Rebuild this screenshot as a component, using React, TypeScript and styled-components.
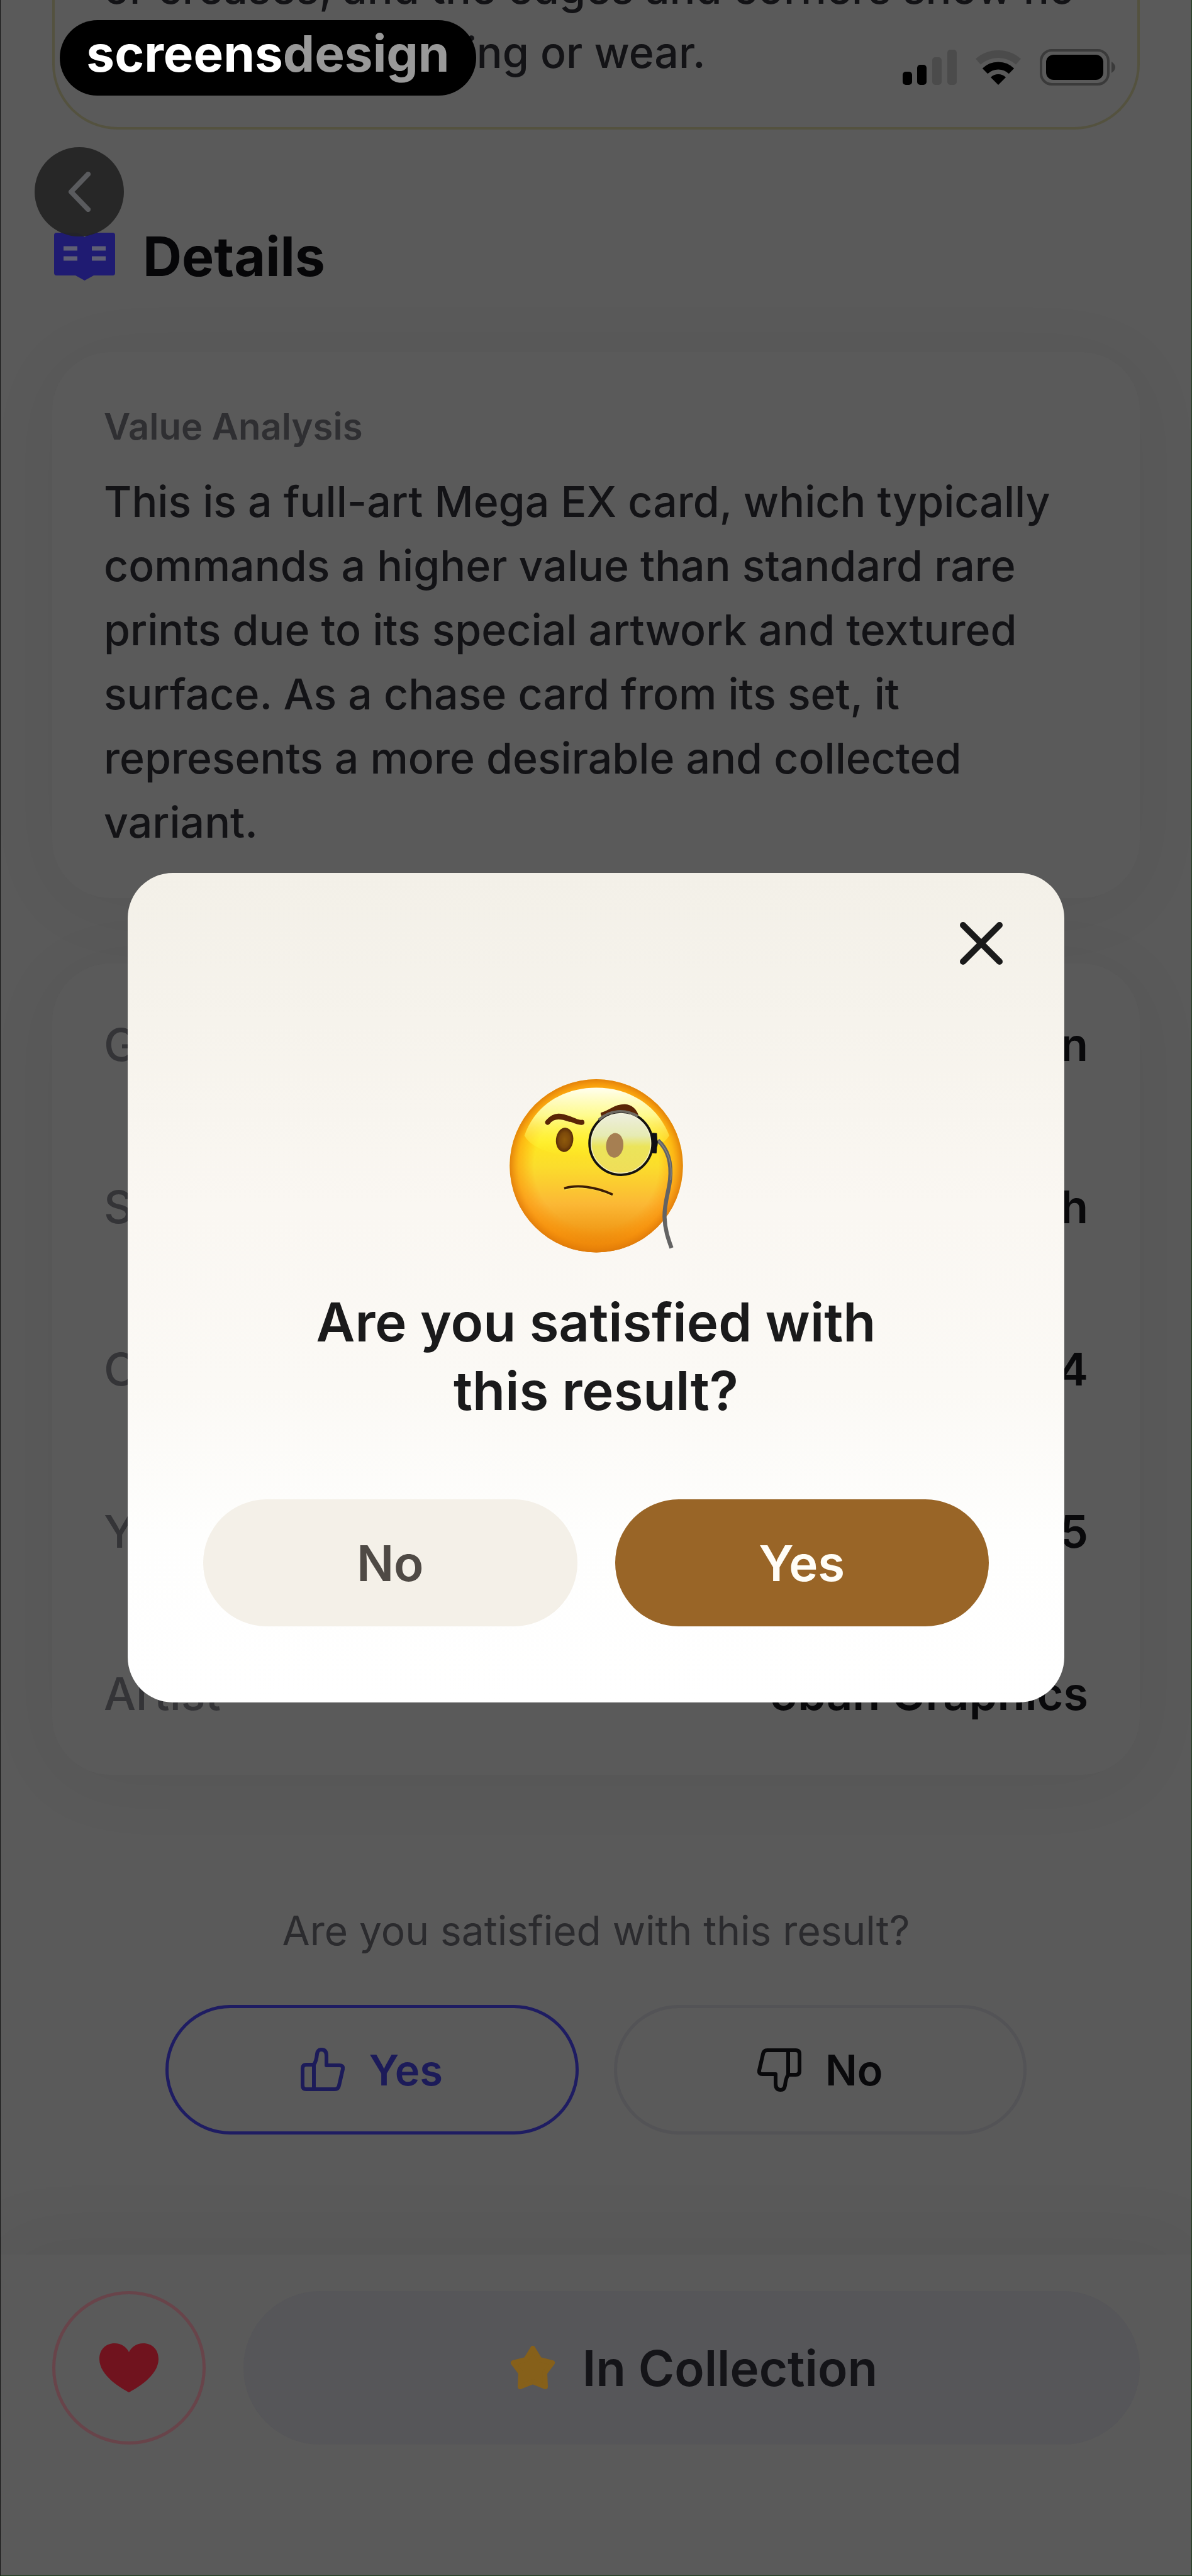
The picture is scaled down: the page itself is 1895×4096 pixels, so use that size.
import React from "react";
import styled, { createGlobalStyle, css } from "styled-components";

const GlobalStyle = createGlobalStyle`
  *, *::before, *::after { box-sizing: border-box; }
  body {
    margin: 0;
    background: #5a5a5a;
    font-family: Inter, "Liberation Sans", sans-serif;
  }
  h1, h2, h3, p, dl, dt, dd { margin: 0; }
  button { font: inherit; cursor: pointer; }
`;

const Page = styled.div`
  position: relative;
  display: flex;
  flex-direction: column;
  min-height: 100vh;
  overflow: hidden;
  background: #5a5a5a;
  border: 1px solid #1d3d1b;
  border-top: 0;
  border-left-color: #161616;
`;

const Content = styled.main`
  display: flex;
  flex-direction: column;
  flex: 1;
  padding: 0 82px;
`;

const bodyText = css`
  font-size: 68px;
  line-height: 102px;
  font-weight: 500;
  color: #131316;
`;

const ConditionCard = styled.section`
  margin-top: -70px;
  padding: 0 78px 68px;
  border: 4px solid #54523f;
  border-top: 0;
  border-radius: 0 0 104px 104px;
`;

const Paragraph = styled.p`
  ${bodyText}
`;

const SectionHeader = styled.header`
  display: flex;
  align-items: center;
  gap: 44px;
  height: 100px;
  margin-top: 152px;
  padding-left: 3px;
`;

const SectionTitle = styled.h1`
  font-size: 86px;
  line-height: 100px;
  font-weight: 700;
  color: #060608;
`;

const Card = styled.section`
  border-radius: 92px;
  padding: 0 82px;
  background: #5a5a5a;
  box-shadow: 0 12px 120px rgba(0, 0, 0, 0.05);
`;

const AnalysisCard = styled(Card)`
  margin-top: 102px;
  padding-top: 82px;
  padding-bottom: 70px;
`;

const CardLabel = styled.h2`
  margin-bottom: 32px;
  font-size: 58px;
  line-height: 72px;
  font-weight: 600;
  color: #2f2f32;
`;

const FactsCard = styled(Card)`
  margin-top: 104px;
`;

const FactList = styled.dl`
  padding: 0;
`;

const Fact = styled.div`
  display: flex;
  justify-content: space-between;
  align-items: center;
  height: 258px;
  font-size: 72px;
  line-height: 102px;
`;

const FactName = styled.dt`
  font-weight: 500;
  color: #343437;
`;

const FactValue = styled.dd`
  font-weight: 600;
  color: #09090b;
`;

const Feedback = styled.section`
  display: flex;
  flex-direction: column;
  gap: 70px;
  margin-top: 200px;
  padding: 0 180px;
`;

const FeedbackQuestion = styled.p`
  text-align: center;
  font-size: 64px;
  line-height: 96px;
  font-weight: 400;
  color: #2b2b2e;
`;

const ButtonRow = styled.div`
  display: flex;
  gap: 56px;
`;

const FeedbackButton = styled.button<{ $tone: "accent" | "plain" }>`
  flex: 1;
  display: flex;
  align-items: center;
  justify-content: center;
  gap: 38px;
  height: 206px;
  padding: 0;
  border: 5px solid ${(p) => (p.$tone === "accent" ? "#1e1c62" : "#535356")};
  border-radius: 103px;
  background: transparent;
  color: ${(p) => (p.$tone === "accent" ? "#1c1b59" : "#09090b")};
  font-size: 67px;
  font-weight: 600;
`;

const BottomBar = styled.footer`
  display: flex;
  gap: 60px;
  margin-top: 190px;
  padding: 58px 82px 208px;
  background: #5a5a5a;
  box-shadow: 0 -20px 120px rgba(0, 0, 0, 0.05);
`;

const FavouriteButton = styled.button`
  display: flex;
  align-items: center;
  justify-content: center;
  width: 244px;
  height: 244px;
  padding: 0;
  border: 5px solid #68444a;
  border-radius: 50%;
  background: transparent;
`;

const CollectionButton = styled.button`
  flex: 1;
  display: flex;
  align-items: center;
  justify-content: center;
  gap: 44px;
  height: 244px;
  padding: 0 0 0 8px;
  border: 0;
  border-radius: 122px;
  background: #565659;
  color: #141418;
  font-size: 78px;
  font-weight: 600;
`;

const StatusBar = styled.div`
  position: absolute;
  top: 78px;
  right: 120px;
  display: flex;
  align-items: center;
  gap: 29px;
`;

const BackButton = styled.button`
  position: absolute;
  top: 234px;
  left: 54px;
  display: flex;
  align-items: center;
  justify-content: center;
  width: 142px;
  height: 142px;
  padding: 0;
  border: 0;
  border-radius: 50%;
  background: rgba(36, 36, 36, 0.94);
`;

const Badge = styled.a`
  position: absolute;
  top: 32px;
  left: 94px;
  display: flex;
  align-items: center;
  justify-content: center;
  width: 662px;
  height: 120px;
  padding-bottom: 14px;
  border-radius: 60px;
  background: #000;
  color: #fff;
  font-size: 80px;
  line-height: 96px;
  font-weight: 700;
  text-decoration: none;
`;

const BadgeMuted = styled.span`
  color: #999;
`;

const Overlay = styled.div`
  position: absolute;
  inset: 0;
  display: flex;
  align-items: center;
  justify-content: center;
  padding: 0 202px;
`;

const Dialog = styled.div`
  flex: 1;
  display: flex;
  flex-direction: column;
  padding: 58px 120px 121px;
  border-radius: 72px;
  background: linear-gradient(#f3f0e8 0%, #f6f3ec 18%, #faf7f2 40%, #fbf9f5 62%, #fefefd 80%, #fff 100%);
`;

const CloseButton = styled.button`
  align-self: flex-end;
  display: flex;
  align-items: center;
  justify-content: center;
  width: 108px;
  height: 108px;
  margin-right: -42px;
  padding: 0;
  border: 0;
  background: transparent;
`;

const DialogBody = styled.div`
  display: flex;
  flex-direction: column;
  align-items: center;
  gap: 56px;
  margin-top: 162px;
`;

const DialogTitle = styled.h2`
  text-align: center;
  font-size: 85px;
  line-height: 109px;
  font-weight: 600;
  color: #1a1a1b;
`;

const DialogActions = styled.div`
  display: flex;
  gap: 60px;
  margin-top: 118px;
`;

const DialogButton = styled.button<{ $primary?: boolean }>`
  flex: 1;
  height: 202px;
  padding: 0;
  border: 0;
  border-radius: 101px;
  background: ${(p) => (p.$primary ? "#996527" : "#f4f0e8")};
  color: ${(p) => (p.$primary ? "#fffdf6" : "#4f4a45")};
  font-size: 78px;
  font-weight: 600;
`;

const BookIcon = () => (
  <svg width="97" height="76" viewBox="0 0 97 76" aria-hidden="true">
    <path
      d="M4 0H36Q43 2 48.500 7Q54 2 61 0H93Q97 0 97 4V64Q97 68 93 68H63L48.500 76L34 68H4Q0 68 0 64V4Q0 0 4 0Z"
      fill="#1f1b72"
    />
    <path d="M15 25H37M15 41H37M60 25H82M60 41H82" stroke="#5f5f74" strokeWidth="7" />
  </svg>
);

const ThumbUp = () => (
  <svg width="70" height="70" viewBox="0 0 70 70" fill="none" stroke="currentColor" strokeWidth="6" strokeLinejoin="round" strokeLinecap="round" aria-hidden="true">
    <path d="M21 27H9Q3 27 3 33V60Q3 66 9 66H54Q60 66 61 60L67 34Q68 28 62 28H41V13Q41 3 33 3Q27 3 26 10Q25 21 21 27V66" />
  </svg>
);

const ThumbDown = () => (
  <svg width="70" height="70" viewBox="0 0 70 70" fill="none" stroke="currentColor" strokeWidth="6" strokeLinejoin="round" strokeLinecap="round" aria-hidden="true">
    <path d="M49 43H61Q67 43 67 37V10Q67 4 61 4H16Q10 4 9 10L3 36Q2 42 8 42H29V57Q29 67 37 67Q43 67 44 60Q45 49 49 43V4" />
  </svg>
);

const HeartIcon = () => (
  <svg width="94" height="78" viewBox="0 0 94 78" aria-hidden="true">
    <path d="M47 78C36 72 0 52 0 25C0 9 11 0 24 0C35 0 43 6 47 14C51 6 59 0 70 0C83 0 94 9 94 25C94 52 58 72 47 78Z" fill="#70131e" />
  </svg>
);

const StarIcon = () => (
  <svg width="70" height="70" viewBox="0 0 70 70" aria-hidden="true">
    <path
      d="M35 4L46 22L66 27L54 43L55 65L35 57L15 65L16 43L4 27L24 22Z"
      fill="#86601a"
      stroke="#86601a"
      strokeWidth="8"
      strokeLinejoin="round"
    />
  </svg>
);

const SignalIcon = () => (
  <svg width="86" height="56" viewBox="0 0 86 56" aria-hidden="true">
    <rect x="0" y="35" width="15" height="21" rx="5" fill="#000" />
    <rect x="23" y="24" width="15" height="32" rx="5" fill="#000" />
    <rect x="47" y="12" width="15" height="44" rx="5" fill="#4b4b4b" />
    <rect x="71" y="0" width="15" height="56" rx="5" fill="#4b4b4b" />
  </svg>
);

const WifiIcon = () => (
  <svg width="74" height="56" viewBox="0 0 74 56" aria-hidden="true">
    <path d="M5 19A48.500 48.500 0 0 1 69 19" fill="none" stroke="#4b4b4b" strokeWidth="12" />
    <path d="M16 34A30 30 0 0 1 58 34" fill="none" stroke="#000" strokeWidth="12" />
    <path d="M25 44A17 17 0 0 1 49 44L37 56Z" fill="#000" />
  </svg>
);

const BatteryIcon = () => (
  <svg width="121" height="58" viewBox="0 0 121 58" aria-hidden="true">
    <rect x="2" y="2" width="107" height="54" rx="17" fill="none" stroke="#3a3a3a" strokeWidth="4" />
    <rect x="10" y="9" width="91" height="40" rx="12" fill="#000" />
    <path d="M114 20Q120 24 120 29Q120 34 114 38Z" fill="#3a3a3a" />
  </svg>
);

const MonocleFace = () => (
  <svg width="276" height="276" viewBox="195 174 942 942" role="img" aria-label="Face with monocle">
    <defs>
      <linearGradient id="skin" x1="0" y1="0" x2="0" y2="1">
        <stop offset="0" stopColor="#ffc21a" />
        <stop offset="0.35" stopColor="#ffe81f" />
        <stop offset="0.5" stopColor="#fbdd2c" />
        <stop offset="0.72" stopColor="#fbb835" />
        <stop offset="0.88" stopColor="#f19a17" />
        <stop offset="1" stopColor="#d97c0c" />
      </linearGradient>
      <radialGradient id="rim" cx="0.5" cy="0.5" r="0.5">
        <stop offset="0.72" stopColor="#ff8a00" stopOpacity="0" />
        <stop offset="0.9" stopColor="#fb8c05" stopOpacity="0.5" />
        <stop offset="1" stopColor="#e07a08" stopOpacity="0.9" />
      </radialGradient>
      <linearGradient id="shine" x1="0" y1="0" x2="0" y2="1">
        <stop offset="0" stopColor="#fffff0" />
        <stop offset="0.4" stopColor="#feff9a" stopOpacity="0.9" />
        <stop offset="1" stopColor="#ffff20" stopOpacity="0" />
      </linearGradient>
      <linearGradient id="glass" x1="0" y1="0" x2="0" y2="1">
        <stop offset="0" stopColor="#eeeee2" />
        <stop offset="0.38" stopColor="#e6ebb2" />
        <stop offset="0.55" stopColor="#ebe45a" />
        <stop offset="1" stopColor="#f0dd58" />
      </linearGradient>
      <radialGradient id="eye">
        <stop offset="0" stopColor="#8f5a0c" />
        <stop offset="0.6" stopColor="#7d4a0a" />
        <stop offset="1" stopColor="#5a2d08" />
      </radialGradient>
    </defs>
    <circle cx="666" cy="644" r="470" fill="url(#skin)" />
    <circle cx="666" cy="644" r="470" fill="url(#rim)" />
    <path d="M276 480C330 320 480 220 666 220C850 220 1000 320 1062 480C1010 560 860 600 666 600C470 600 320 560 276 480Z" fill="url(#shine)" />
    <ellipse cx="494" cy="503" rx="47" ry="66" fill="url(#eye)" transform="rotate(6 494 503)" />
    <path d="M402 408C440 360 480 373 520 388C550 400 570 412 588 408" fill="none" stroke="#5a2506" strokeWidth="27" strokeLinecap="round" strokeLinejoin="round" />
    <path d="M404 405C440 371 480 380 520 394" fill="none" stroke="#5a2506" strokeWidth="22" strokeLinecap="round" />
    <path d="M690 356C735 344 765 310 820 310C862 312 885 340 895 370L800 352L700 378C692 374 688 364 690 356Z" fill="#5a2506" />
    <path d="M700 378Q790 318 893 366L870 374Q790 340 712 388Z" fill="#85664a" />
    <circle cx="800" cy="522" r="170" fill="url(#glass)" />
    <ellipse cx="766" cy="533" rx="47" ry="67" fill="#a67f52" transform="rotate(5 766 533)" />
    <circle cx="800" cy="522" r="162" fill="none" stroke="#f5f4d8" strokeWidth="6" opacity="0.8" />
    <circle cx="800" cy="522" r="171" fill="none" stroke="#15130f" strokeWidth="13" />
    <path d="M680 394A171 171 0 0 1 890 376" fill="none" stroke="#6e6a62" strokeWidth="14" />
    <path d="M498 770C560 748 660 758 750 801" fill="none" stroke="#ffe95a" strokeWidth="13" strokeLinecap="round" />
    <path d="M498 765C560 746 660 756 749 798" fill="none" stroke="#3d1c05" strokeWidth="13" strokeLinecap="square" />
    <path d="M1000 506C1050 550 1076 620 1066 720C1058 790 1036 840 1036 920C1038 990 1056 1040 1074 1090" fill="none" stroke="#636363" strokeWidth="22" />
    <path d="M1003 508C1056 562 1080 630 1070 720" fill="none" stroke="#858585" strokeWidth="5" />
    <path d="M972 468L992 470L994 500Q1000 522 992 545L990 574L970 572Q976 522 968 480Z" fill="#0f0f14" stroke="#0f0f14" strokeWidth="6" strokeLinejoin="round" />
  </svg>
);

const facts = [
  { name: "Game", value: "Pokémon" },
  { name: "Set", value: "BREAKthrough" },
  { name: "Card Number", value: "154" },
  { name: "Year", value: "2015" },
  { name: "Artist", value: "5ban Graphics" },
];

export default function App() {
  return (
    <>
      <GlobalStyle />
      <Page>
        <Content>
          <ConditionCard>
            <Paragraph>
              or creases, and the edges and corners show no
              <br />
              noticeable whitening or wear.
            </Paragraph>
          </ConditionCard>

          <SectionHeader>
            <BookIcon />
            <SectionTitle>Details</SectionTitle>
          </SectionHeader>

          <AnalysisCard>
            <CardLabel>Value Analysis</CardLabel>
            <Paragraph>
              This is a full-art Mega EX card, which typically commands a higher value than standard rare prints due to
              its special artwork and textured surface. As a chase card from its set, it represents a more desirable
              and collected variant.
            </Paragraph>
          </AnalysisCard>

          <FactsCard>
            <FactList>
              {facts.map((fact) => (
                <Fact key={fact.name}>
                  <FactName>{fact.name}</FactName>
                  <FactValue>{fact.value}</FactValue>
                </Fact>
              ))}
            </FactList>
          </FactsCard>

          <Feedback>
            <FeedbackQuestion>Are you satisfied with this result?</FeedbackQuestion>
            <ButtonRow>
              <FeedbackButton type="button" $tone="accent">
                <ThumbUp />
                Yes
              </FeedbackButton>
              <FeedbackButton type="button" $tone="plain">
                <ThumbDown />
                No
              </FeedbackButton>
            </ButtonRow>
          </Feedback>
        </Content>

        <BottomBar>
          <FavouriteButton type="button" aria-label="Favourite">
            <HeartIcon />
          </FavouriteButton>
          <CollectionButton type="button">
            <StarIcon />
            In Collection
          </CollectionButton>
        </BottomBar>

        <BackButton type="button" aria-label="Back">
          <svg width="36" height="64" viewBox="0 0 36 64" aria-hidden="true">
            <path d="M32 4L5 32L32 60" fill="none" stroke="#5a5b5e" strokeWidth="8" strokeLinecap="round" strokeLinejoin="round" />
          </svg>
        </BackButton>

        <StatusBar>
          <SignalIcon />
          <WifiIcon />
          <BatteryIcon />
        </StatusBar>

        <Badge href="#screensdesign">
          screens<BadgeMuted>design</BadgeMuted>
        </Badge>

        <Overlay>
          <Dialog role="dialog" aria-modal="true" aria-labelledby="dialog-title">
            <CloseButton type="button" aria-label="Close">
              <svg width="68" height="68" viewBox="0 0 68 68" aria-hidden="true">
                <path d="M5 5L63 63M63 5L5 63" fill="none" stroke="#1a1a1a" strokeWidth="10" strokeLinecap="round" />
              </svg>
            </CloseButton>
            <DialogBody>
              <MonocleFace />
              <DialogTitle id="dialog-title">
                Are you satisfied with
                <br />
                this result?
              </DialogTitle>
            </DialogBody>
            <DialogActions>
              <DialogButton type="button">No</DialogButton>
              <DialogButton type="button" $primary>
                Yes
              </DialogButton>
            </DialogActions>
          </Dialog>
        </Overlay>
      </Page>
    </>
  );
}
